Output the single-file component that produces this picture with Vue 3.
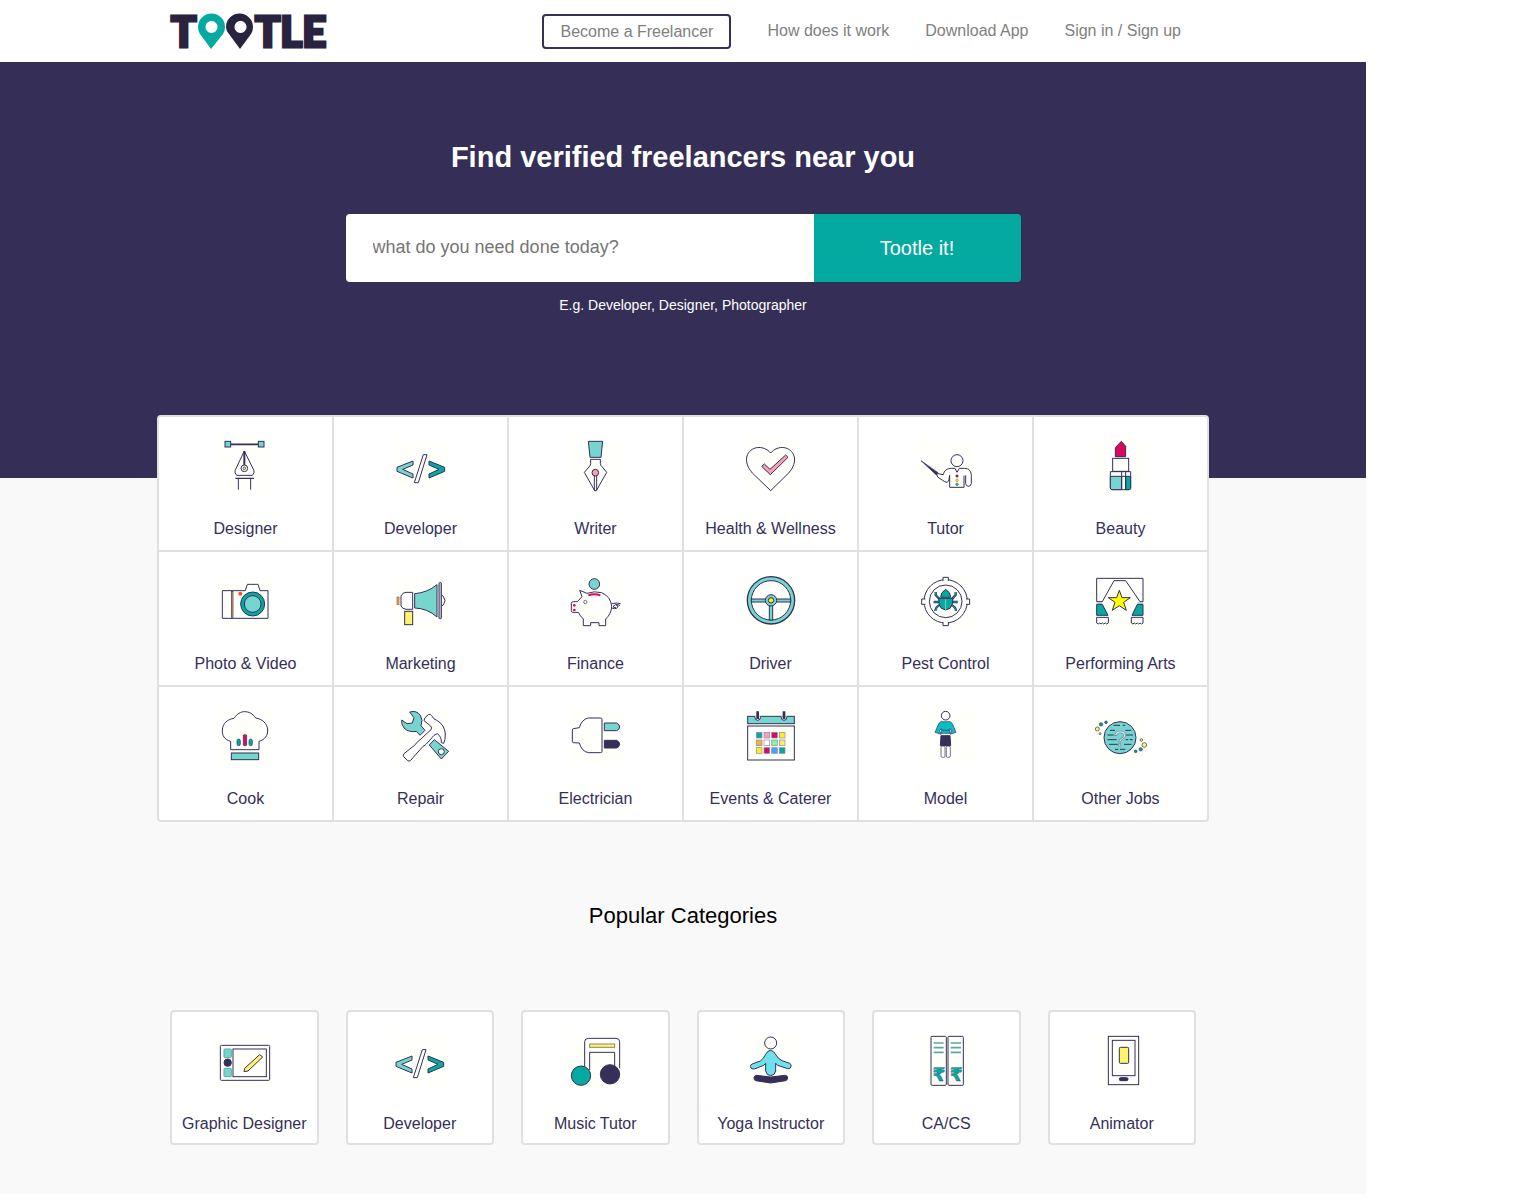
<script setup>
import { ref } from 'vue'

const query = ref('')

const MINT = '#76d6cf'
const TEAL = '#04a99f'
const NAVY = '#352f59'
const PINK = '#ff9fb4'
const RED = '#d9095b'
const YELLOW = '#fff36b'

const swatches = [
  [TEAL, PINK, RED, '#fcee21'],
  ['#ffad33', '#ffffff', '#7dfc92', '#ffed66'],
  ['#fcee21', RED, '#4d9ffc', TEAL],
]
const swatchRects = swatches
  .map((row, r) =>
    row
      .map((c, i) => `<rect x="${769 + i * 23}" y="${547 + r * 23}" width="17" height="17" fill="${c}" stroke-width="2" stroke="#8c88a6"/>`)
      .join(''),
  )
  .join('')

const legPath = 'M241 126V135L253 148M235 156H251M240 183Q241 170 254 165'
const bugLegs = `<path d="${legPath}" stroke-width="7"/><path d="${legPath}" stroke="${TEAL}" stroke-width="3"/>`

const icons = {
  designer: {
    box: '204 99 168 168',
    art: `<path d="M242 118H325" stroke-width="5"/><rect x="225" y="109" width="17" height="17" fill="${MINT}"/><rect x="325" y="109" width="17" height="17" fill="${MINT}"/>
      <path d="M283 138L255 197Q253 203 260 211H307Q314 203 312 197Z"/><path d="M283 138V182" stroke-width="6"/><circle cx="283" cy="190" r="10" fill="#fff"/><circle cx="283" cy="190" r="4" fill="#fcee21" stroke-width="2"/>
      <path d="M256 220H312" stroke-width="4"/><path d="M265 220V254M302 220V254"/>`,
  },
  developer: {
    box: '729 99 168 168',
    art: `<path d="M789 168L741 187V199L789 219V207L758 193L789 180Z" fill="${MINT}"/><path d="M820 149H831L805 233H793Z"/><path d="M837 168L884 187V199L837 219V207L867 193L837 180Z" fill="${TEAL}"/>`,
  },
  writer: {
    box: '204 99 168 168',
    art: `<path d="M265 109H308L303 157H270Z" fill="${MINT}"/><path d="M272 163H301V176Q302 182 307 186L320 202L289 257H284L253 202L267 186Q272 180 272 176Z"/><path d="M283 213V257M290 213V257"/><circle cx="286" cy="203" r="10" fill="${PINK}"/>`,
  },
  health: {
    box: '729 99 168 168',
    art: `<path d="M812 257L757 204C741 185 737 168 741 153C750 124 790 118 812 144C834 118 873 124 882 153C887 168 881 187 866 204Z"/><path d="M785 184L793 177L810 193L857 150L864 157L811 209Z" fill="${PINK}"/>`,
  },
  tutor: {
    box: '188 99 168 168',
    art: `<circle cx="305" cy="167" r="18"/><path d="M197 167L248 203L243 210Z" fill="${NAVY}" stroke-width="2"/>
      <path d="M326 212V247H283V211L280 228Q276 235 268 230L247 216L243 205L264 209C266 197 275 190 289 190H299L305 202L312 190H327C342 190 348 199 348 214V236Q346 244 339 244Q332 243 331 236V211"/>
      <g stroke-width="1"><circle cx="305" cy="213" r="4" fill="${RED}"/><circle cx="305" cy="226" r="4" fill="#fcee21"/><circle cx="305" cy="238" r="4" fill="#2fc56a"/></g>`,
  },
  beauty: {
    box: '714 99 168 168',
    art: `<path d="M781 155V128L799 109L812 124V155Z" fill="${RED}"/><rect x="773" y="160" width="48" height="39"/><path d="M766 200H827V250Q826 254 822 254H771Q766 253 766 249Z"/>
      <path d="M766 214H800V254H771Q766 253 766 249Z" fill="${MINT}"/><path d="M812 214H827V250Q826 254 822 254H812Z" fill="${TEAL}"/><path d="M800 200V254M812 200V254M800 214H812" />`,
  },
  photo: {
    box: '204 69 168 168',
    art: `<path d="M217 122H286L292 103H324L330 122H354V205H217Z"/><rect x="244" y="124" width="5" height="78" fill="#f3a33c" stroke-width="2"/><circle cx="271" cy="131" r="6" fill="#f0532d" stroke="none"/><circle cx="308" cy="162" r="36" fill="${TEAL}"/><circle cx="308" cy="162" r="25" fill="${MINT}"/>`,
  },
  marketing: {
    box: '729 69 168 168',
    art: `<rect x="741" y="141" width="6" height="23" fill="#f3a33c" stroke-width="2" stroke="#8a6a55"/><path d="M753 138Q758 127 768 127H788V178H768Q756 176 753 168Z"/><rect x="764" y="184" width="24" height="40" fill="${YELLOW}"/>
      <path d="M794 131Q832 128 861 104V201Q832 175 794 174Z" fill="${MINT}"/><rect x="867" y="98" width="7" height="108" rx="2" fill="#c9c5d5"/><path d="M875 135Q880 137 882 144Q888 152 882 160Q880 167 875 168"/>`,
  },
  finance: {
    box: '204 69 168 168',
    art: `<circle cx="283" cy="102" r="16" fill="${MINT}"/><path d="M239 121L261 130Q283 122 305 128Q333 140 335 170Q334 192 317 207V227H297V218H272V227H250V207Q240 198 235 187H218Q214 187 214 182V160Q214 155 220 155H232L246 140Z"/>
      <path d="M265 136Q283 129 301 136" stroke="${RED}" stroke-width="6"/><circle cx="256" cy="156" r="5" stroke-width="2"/><g fill="${RED}" stroke="none"><circle cx="223" cy="166" r="4"/><circle cx="223" cy="180" r="4"/></g>
      <path d="M335 161Q350 157 362 161M336 174Q352 180 354 168Q346 160 340 168Q340 176 348 172M347 163L360 166"/>`,
  },
  driver: {
    box: '729 69 168 168',
    art: `<circle cx="813" cy="151" r="71" fill="${MINT}" stroke-width="4"/><circle cx="813" cy="151" r="59" fill="#fffffc"/><rect x="754" y="147" width="118" height="9" fill="${MINT}"/><rect x="808" y="155" width="10" height="55" fill="${MINT}"/><circle cx="813" cy="151" r="17" fill="${MINT}"/><circle cx="813" cy="151" r="8" fill="#fcee21"/>`,
  },
  pest: {
    box: '188 69 168 168',
    art: `<circle cx="271" cy="154" r="65"/><circle cx="271" cy="154" r="49"/>
      <g fill="#fffffc"><path d="M263 93V82H279V93M263 216V227H279V216M210 147H199V163H210M332 147H343V163H332"/></g>
      ${bugLegs}<g transform="translate(542 0) scale(-1 1)">${bugLegs}</g>
      <path d="M256 142Q255 128 271 118Q287 128 286 142Z" fill="${TEAL}"/><path d="M250 145H293Q293 166 284 175Q271 184 258 175Q249 166 250 145Z" fill="${TEAL}"/><path d="M271 148V180" stroke="${MINT}"/>`,
  },
  arts: {
    box: '714 69 168 168',
    art: `<path d="M725 85H864V155H855L812 92H777L742 155H725Z"/><path d="M725 159H742M847 159H864" stroke="#a9a6ba"/><path d="M793 121L801 143H826L806 157L814 181L793 167L772 181L780 157L760 143H785Z" fill="#ffff00"/>
      <path d="M725 163H742L759 196H725Z" fill="${TEAL}"/><path d="M864 163H847L831 196H864Z" fill="${TEAL}"/><path d="M725 202H760V219Q755 225 751 219Q746 225 742 219Q738 225 734 219Q729 225 725 219ZM829 202H864V219Q860 225 855 219Q851 225 847 219Q842 225 838 219Q834 225 829 219Z"/>`,
  },
  cook: {
    box: '204 474 168 168',
    art: `<path d="M242 599V574C222 569 216 555 217 540C218 520 232 508 252 505C262 491 272 485 284 485C297 485 308 491 317 504C337 507 352 520 353 540C354 557 343 570 327 574V599Z"/><rect x="244" y="609" width="82" height="20" fill="${MINT}"/>
      <g stroke-width="2"><rect x="261" y="567" width="10" height="20" rx="5" fill="${TEAL}"/><rect x="280" y="554" width="10" height="33" rx="3" fill="${RED}"/><rect x="297" y="567" width="10" height="20" rx="5" fill="${TEAL}"/></g>`,
  },
  repair: {
    box: '729 474 168 168',
    art: `<path d="M779 486Q800 480 811 496Q820 510 813 527L825 541L810 556L799 544Q777 548 763 535Q753 523 755 510L771 521L787 519L792 503Z" fill="${MINT}"/>
      <path d="M836 493Q842 491 845 497Q850 508 862 512Q884 525 886 552Q886 572 881 580L874 578Q875 560 862 551L852 556L829 582Q826 586 819 589L782 631Q777 636 772 631L761 620Q758 616 762 611L796 584Q799 577 806 573L843 539Q847 534 842 528L822 512Q820 505 836 493Z"/>
      <path d="M853 569L896 604L874 627L838 585Z" fill="${MINT}"/><circle cx="874" cy="605" r="9" fill="#fff"/>`,
  },
  electrician: {
    box: '204 474 168 168',
    art: `<path d="M302 504Q306 504 306 508V604Q306 608 302 608H265Q245 604 238 579L220 578Q217 578 217 574V540Q217 536 220 536L238 533Q245 508 265 504Z"/><path d="M313 519H350Q359 523 359 531Q358 539 350 542H313Z" fill="${MINT}"/><path d="M313 571H350Q359 575 359 583Q358 591 350 594H313Z" fill="${NAVY}"/>`,
  },
  events: {
    box: '729 474 168 168',
    art: `<rect x="743" y="499" width="140" height="22" fill="${MINT}"/><path d="M764 499Q764 511 773 511Q782 511 782 499M843 499Q843 511 852 511Q861 511 861 499" fill="#fffffc"/><path d="M773 484V507M852 484V507" stroke-width="8"/><rect x="743" y="528" width="140" height="102"/>${swatchRects}`,
  },
  model: {
    box: '188 474 168 168',
    art: `<circle cx="271" cy="497" r="13"/><path d="M257 515H285Q291 518 294 528L302 547L285 553V549L290 543L284 536V550H258V536L252 543L257 549V553L239 547L248 526Q250 518 257 515Z" fill="#0bbdc4" stroke-width="2"/><path d="M260 541H282" stroke-width="2"/>
      <path d="M257 557H284L286 587H255Z" fill="${NAVY}"/><rect x="257" y="588" width="12" height="34" rx="4" stroke-width="2"/><rect x="273" y="588" width="12" height="34" rx="4" stroke-width="2"/>`,
  },
  other: {
    box: '714 474 168 168',
    art: `<circle cx="795" cy="563" r="48" fill="${MINT}"/>
      <path d="M776 526H795M803 526H811M765 541H780M811 541H829M757 555H776M812 555H834M757 569H785M812 569H820M824 569H833M762 583H788M807 583H829M780 598H790M795 598H811"/>
      <text x="795" y="589" font-family="Liberation Sans" font-size="68" text-anchor="middle" fill="#e4f5f4" stroke="#5f7890" stroke-width="2">?</text>
      <g stroke-width="2"><circle cx="753" cy="517" r="4" fill="${TEAL}"/><circle cx="738" cy="523" r="5" fill="${TEAL}"/><circle cx="727" cy="537" r="6" fill="${YELLOW}"/><circle cx="735" cy="551" r="3" fill="${YELLOW}"/>
      <circle cx="859" cy="570" r="4" fill="${YELLOW}"/><circle cx="868" cy="585" r="7" fill="${YELLOW}"/><circle cx="857" cy="598" r="5" fill="${TEAL}"/><circle cx="842" cy="604" r="4" fill="${TEAL}"/></g>`,
  },
  graphic: {
    box: '169 99 168 168',
    art: `<rect x="182" y="136" width="148" height="105" rx="3"/><rect x="220" y="147" width="100" height="83"/><rect x="193" y="147" width="22" height="26" rx="3" fill="${MINT}" stroke="#5aa9a8"/><circle cx="204" cy="188" r="11" fill="${NAVY}"/><rect x="193" y="205" width="22" height="25" rx="3" fill="${MINT}" stroke="#5aa9a8"/><path d="M253 215L255 205L300 164L309 171L265 213Z" fill="${YELLOW}"/>`,
  },
  music: {
    box: '171 99 168 168',
    art: `<path d="M224 205V125Q224 115 236 115H318Q329 115 329 125V205M239 210V157H314V200"/><rect x="239" y="132" width="75" height="10" fill="${YELLOW}" stroke="#8c8870"/><circle cx="213" cy="227" r="29" fill="${TEAL}"/><circle cx="300" cy="223" r="29" fill="${NAVY}"/>`,
  },
  yoga: {
    box: '698 99 168 168',
    art: `<circle cx="781" cy="129" r="18"/><path d="M781 151Q790 152 797 165Q803 176 815 182L838 190Q844 193 842 200Q840 208 832 206L802 196Q797 193 796 190V213Q794 226 781 227Q768 226 766 213V190L760 196L732 207Q722 209 720 200Q720 193 728 191L750 183Q760 176 766 163Q772 151 781 151Z" fill="#70e1ec"/>
      <path d="M738 226L781 231L825 226Q832 227 832 234Q831 241 826 242L781 249L736 242Q731 241 731 233Q732 227 738 226Z" fill="${NAVY}"/>`,
  },
  accounts: {
    box: '175 99 168 168',
    art: `<rect x="214" y="109" width="46" height="147" rx="3"/><rect x="265" y="109" width="46" height="147" rx="3"/><path d="M222 129H252M222 143H252M222 157H252M273 129H304M273 143H304M273 157H304" stroke="#5ba6ab" stroke-width="5"/>
      <g font-family="DejaVu Sans" font-weight="bold" font-size="56" text-anchor="middle" fill="${TEAL}" stroke-width="1"><text x="238" y="242">₹</text><text x="290" y="242">₹</text></g>`,
  },
  animator: {
    box: '702 99 168 168',
    art: `<rect x="745" y="109" width="91" height="145"/><rect x="757" y="121" width="68" height="106"/><rect x="778" y="142" width="28" height="48" rx="3" fill="${YELLOW}"/><rect x="778" y="233" width="26" height="9" rx="4" fill="${NAVY}"/>`,
  },
}

const navLinks = ['How does it work', 'Download App', 'Sign in / Sign up']

const categories = [
  ['designer', 'Designer'],
  ['developer', 'Developer'],
  ['writer', 'Writer'],
  ['health', 'Health & Wellness'],
  ['tutor', 'Tutor'],
  ['beauty', 'Beauty'],
  ['photo', 'Photo & Video'],
  ['marketing', 'Marketing'],
  ['finance', 'Finance'],
  ['driver', 'Driver'],
  ['pest', 'Pest Control'],
  ['arts', 'Performing Arts'],
  ['cook', 'Cook'],
  ['repair', 'Repair'],
  ['electrician', 'Electrician'],
  ['events', 'Events & Caterer'],
  ['model', 'Model'],
  ['other', 'Other Jobs'],
]

const popular = [
  ['graphic', 'Graphic Designer'],
  ['developer', 'Developer'],
  ['music', 'Music Tutor'],
  ['yoga', 'Yoga Instructor'],
  ['accounts', 'CA/CS'],
  ['animator', 'Animator'],
]
</script>

<template>
  <div class="page">
    <header class="header">
      <div class="wrap bar">
        <a href="#" class="brand" aria-label="Tootle home">
          <svg class="logo" viewBox="0 0 147 35" aria-hidden="true">
            <g class="letters">
              <text x="0" y="33">T</text>
              <text x="84" y="33">TLE</text>
            </g>
            <path fill="#04a99f" fill-rule="evenodd" d="M40 35L29 20Q27 17 27 13A13 13 0 0 1 54 13Q54 17 52 20ZM40 7a6 6 0 1 0 1 0Z" />
            <path fill="#29233f" fill-rule="evenodd" d="M69 35L58 20Q55 17 55 13A13 13 0 0 1 82 13Q82 17 80 20ZM69 7a6 6 0 1 0 1 0Z" />
          </svg>
        </a>
        <nav class="nav">
          <button type="button" class="become">Become a Freelancer</button>
          <a v-for="link in navLinks" :key="link" href="#">{{ link }}</a>
        </nav>
      </div>
    </header>

    <section class="hero">
      <h1>Find verified freelancers near you</h1>
      <form class="search" @submit.prevent>
        <input v-model="query" type="text" aria-label="What do you need done today?" placeholder="what do you need done today?" />
        <button type="submit">Tootle it!</button>
      </form>
      <p class="hint">E.g. Developer, Designer, Photographer</p>
    </section>

    <main class="wrap">
      <div class="grid">
        <a v-for="[icon, label] in categories" :key="label" href="#" class="tile">
          <svg class="icon" :viewBox="icons[icon].box" aria-hidden="true" v-html="icons[icon].art"></svg>
          <span>{{ label }}</span>
        </a>
      </div>

      <h2>Popular Categories</h2>
      <div class="cards">
        <a v-for="[icon, label] in popular" :key="label" href="#" class="tile card">
          <svg class="icon" :viewBox="icons[icon].box" aria-hidden="true" v-html="icons[icon].art"></svg>
          <span>{{ label }}</span>
        </a>
      </div>
    </main>
  </div>
</template>

<style>
body {
  margin: 0;
  background: #fff;
}
</style>

<style scoped>
.page {
  max-width: 1366px;
  background: #f9f9f9;
  font-family: 'Liberation Sans', Arial, sans-serif;
  font-size: 16px;
  line-height: 20px;
}

.page * {
  box-sizing: border-box;
}

a {
  color: inherit;
  text-decoration: none;
}

button,
input {
  font-family: inherit;
  border: 0;
}

.wrap {
  max-width: 1052px;
  margin: 0 auto;
}

.header {
  background: #fff;
}

.bar {
  display: flex;
  align-items: center;
  justify-content: space-between;
  height: 62px;
  padding: 0 28px 0 14px;
}

.brand,
.logo {
  display: block;
}

.logo {
  width: 147px;
  height: 35px;
  overflow: visible;
}

.letters {
  font-family: Lato, 'Liberation Sans', sans-serif;
  font-weight: 900;
  font-size: 42px;
  fill: #29233f;
  stroke: #29233f;
  stroke-width: 3px;
}

.nav {
  display: flex;
  align-items: center;
  gap: 36px;
  color: #808080;
}

.become {
  height: 35px;
  padding: 2px 16px 0;
  border: 2px solid #352f59;
  border-radius: 4px;
  background: #fff;
  color: #808080;
  font-size: 16px;
}

.hero {
  display: flex;
  flex-direction: column;
  align-items: center;
  padding: 78px 20px 163px;
  background: #352f58;
  color: #fff;
}

h1 {
  margin: 0 0 40px;
  font-size: 29px;
  line-height: 34px;
}

.search {
  display: flex;
  width: 100%;
  max-width: 675px;
  height: 68px;
  border-radius: 4px;
  overflow: hidden;
}

.search input {
  flex: 1;
  min-width: 0;
  padding: 0 27px 2px;
  background: #fff;
  font-size: 18px;
  outline: 0;
}

.search input::placeholder {
  color: #757575;
}

.search button {
  width: 207px;
  background: #04a99f;
  color: #fff;
  font-size: 20px;
}

.hint {
  margin: 13px 0 0;
  font-size: 14px;
}

.grid {
  display: grid;
  grid-template-columns: repeat(6, 1fr);
  gap: 2px;
  margin-top: -63px;
  border: 2px solid #e0e0e0;
  border-radius: 4px;
  background: #e0e0e0;
  overflow: hidden;
}

.tile {
  display: flex;
  flex-direction: column;
  align-items: center;
  gap: 25px;
  padding: 21px 0 11px;
  background: #fff;
  color: #352f59;
  white-space: nowrap;
}

.icon {
  width: 56px;
  height: 56px;
  background: #fffffc;
  fill: none;
  stroke: #352f59;
  stroke-width: 3px;
}

h2 {
  margin: 81px 0;
  color: #000;
  font-size: 22px;
  font-weight: 400;
  line-height: 26px;
  text-align: center;
}

.cards {
  display: grid;
  grid-template-columns: repeat(6, 1fr);
  gap: 27px;
  padding: 0 13px 49px;
}

.card {
  padding-bottom: 9px;
  border: 2px solid #e0e0e0;
  border-radius: 4px;
}
</style>
